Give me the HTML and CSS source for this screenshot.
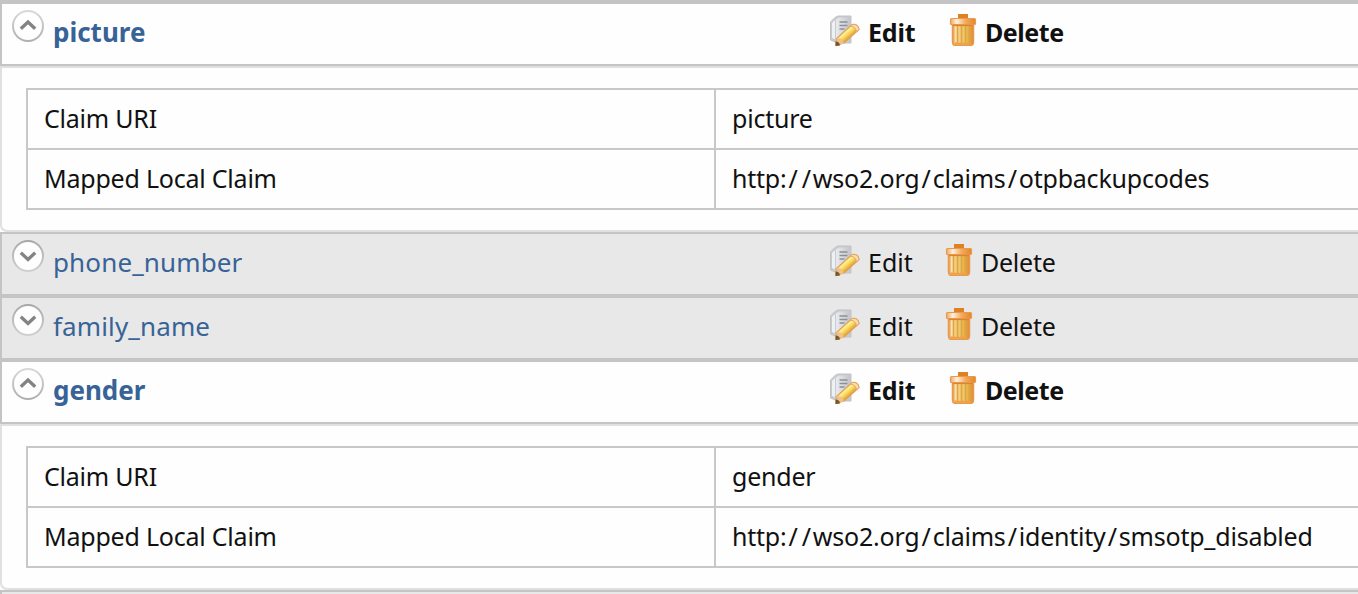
FILE: index.html
```html
<!DOCTYPE html>
<html lang="en">
<head>
<meta charset="utf-8">
<title>Claims</title>
<link rel="stylesheet" href="styles.css">
</head>
<body>
<svg class="defs" width="0" height="0" aria-hidden="true">
  <defs>
    <linearGradient id="ringUp" x1="0" y1="0" x2="0" y2="1"><stop offset="0" stop-color="#d8d8d8"/><stop offset="1" stop-color="#b0b0b0"/></linearGradient>
    <linearGradient id="ringDown" x1="0" y1="0" x2="0" y2="1"><stop offset="0" stop-color="#a8a8a8"/><stop offset="1" stop-color="#d0d0d0"/></linearGradient>
    <linearGradient id="page" x1="0" y1="0" x2="1" y2="0"><stop offset="0" stop-color="#e9ebee"/><stop offset="1" stop-color="#c3c5ca"/></linearGradient>
    <linearGradient id="pencil" gradientUnits="userSpaceOnUse" x1="15" y1="14" x2="22" y2="22"><stop offset="0" stop-color="#f3c65c"/><stop offset=".35" stop-color="#fff09a"/><stop offset=".65" stop-color="#f6d24e"/><stop offset="1" stop-color="#df963c"/></linearGradient>
    <linearGradient id="bin" x1="0" y1="0" x2="1" y2="0"><stop offset="0" stop-color="#e99a48"/><stop offset=".2" stop-color="#f8d58e"/><stop offset=".6" stop-color="#efc45c"/><stop offset="1" stop-color="#e08a2c"/></linearGradient>
    <linearGradient id="lid" x1="0" y1="0" x2="1" y2="0"><stop offset="0" stop-color="#f0a860"/><stop offset=".25" stop-color="#fff0dc"/><stop offset=".6" stop-color="#f3ab5c"/><stop offset="1" stop-color="#e5852a"/></linearGradient>
  </defs>
  <symbol id="up" viewBox="0 0 32 32"><circle cx="16" cy="16" r="15" fill="#fefefe" stroke="url(#ringUp)" stroke-width="2"/><path d="M8.800 18.800 16 12l7.200 6.800" fill="none" stroke="#838383" stroke-width="3.300"/></symbol>
  <symbol id="down" viewBox="0 0 32 32"><circle cx="16" cy="16" r="15" fill="#fefefe" stroke="url(#ringDown)" stroke-width="2"/><path d="M8.800 12.700 16 19.500l7.200-6.800" fill="none" stroke="#838383" stroke-width="3.300"/></symbol>
  <symbol id="edit" viewBox="0 0 32 32">
    <path d="M6 2.500 9 1h13v27H9l-7.500-3V7z" fill="#c9cbcf" stroke="#c0c2c6"/>
    <path d="M7 4.500 10 2.500h11v24H7z" fill="url(#page)"/>
    <path d="M3 8l3-3v19l-3-1z" fill="#eff0f2"/>
    <path d="M10.500 7h8M10.500 10.500h8M10.500 14h5" stroke="#8d9097" stroke-width="1.500"/>
    <path d="M7 30.500 7.500 23.500 23 9.500q6-1 7 5L15 28z" fill="url(#pencil)" stroke="#e0a155" stroke-width="1.200"/>
    <path d="M21.500 11 23 9.500q6-1 7 5L27.500 17q-.5-5-6-6z" fill="#fbdcb0" stroke="#e2a466"/>
    <path d="M7.500 23.500q6-1 7.500 5l-7 2z" fill="#f0c08a"/>
    <path d="M6.500 26.500q4 0 4.500 4l-4.500.5z" fill="#7a5426"/>
  </symbol>
  <symbol id="trash" viewBox="0 0 28 32">
    <path d="M9 0h10v5H9z" fill="#df8122"/>
    <path d="M3.500 10h21v18q0 3.500-3.500 3.500H7Q3.500 31.500 3.500 28z" fill="url(#bin)" stroke="#e9994c" stroke-width="1.500"/>
    <path d="M8.500 12v17M12.500 12v17M16.500 12v17M20.500 12v17" stroke="#dca546" stroke-width="1.500"/>
    <path d="M6.500 12v16" stroke="#fbe0b4" stroke-width="1.500"/>
    <path d="M6 29.800h16" stroke="#eda04c" stroke-width="2"/>
    <rect x="1.500" y="4.500" width="25" height="6" rx="1" fill="url(#lid)" stroke="#ea9a50" stroke-width="1.200"/>
    <path d="M4 11.500h20" stroke="#d98430" stroke-width="1.200"/>
  </symbol>
</svg>
<main class="claims">
  <section>
    <header class="bar open">
      <svg class="toggle"><use href="#up"/></svg><a class="name">picture</a>
      <div class="actions"><svg class="edit-icon"><use href="#edit"/></svg><span class="edit">Edit</span><svg class="trash-icon"><use href="#trash"/></svg><span class="delete">Delete</span></div>
    </header>
    <div class="panel">
      <div class="table">
        <div class="cell">Claim URI</div><div class="cell">picture</div>
        <div class="cell">Mapped Local Claim</div><div class="cell">http:<i>/</i><i>/</i>wso2.org<i>/</i>claims<i>/</i>otpbackupcodes</div>
      </div>
    </div>
  </section>
  <section>
    <header class="bar">
      <svg class="toggle"><use href="#down"/></svg><a class="name">phone_number</a>
      <div class="actions"><svg class="edit-icon"><use href="#edit"/></svg><span class="edit">Edit</span><svg class="trash-icon"><use href="#trash"/></svg><span class="delete">Delete</span></div>
    </header>
  </section>
  <section>
    <header class="bar">
      <svg class="toggle"><use href="#down"/></svg><a class="name">family_name</a>
      <div class="actions"><svg class="edit-icon"><use href="#edit"/></svg><span class="edit">Edit</span><svg class="trash-icon"><use href="#trash"/></svg><span class="delete">Delete</span></div>
    </header>
  </section>
  <section>
    <header class="bar open">
      <svg class="toggle"><use href="#up"/></svg><a class="name">gender</a>
      <div class="actions"><svg class="edit-icon"><use href="#edit"/></svg><span class="edit">Edit</span><svg class="trash-icon"><use href="#trash"/></svg><span class="delete">Delete</span></div>
    </header>
    <div class="panel">
      <div class="table">
        <div class="cell">Claim URI</div><div class="cell">gender</div>
        <div class="cell">Mapped Local Claim</div><div class="cell">http:<i>/</i><i>/</i>wso2.org<i>/</i>claims<i>/</i>identity<i>/</i>smsotp_disabled</div>
      </div>
    </div>
  </section>
  <div class="next"></div>
</main>
</body>
</html>
```
FILE: styles.css
```css
* { box-sizing: border-box; }
body { margin: 0; background: #fefefe; font-family: "Noto Sans", sans-serif; font-size: 25px; color: #111; overflow: hidden; }
.defs { display: block; height: 0; }
.claims { height: 594px; border-top: 2px solid #c4c4c6; overflow: hidden; }
.bar { display: flex; height: 64px; border: 2px solid #c4c4c6; border-right: 0; background: #e8e8e8; padding-left: 10px; line-height: 36px; }
.open { background: #fefefe; font-weight: 700; }
.toggle { width: 32px; height: 32px; margin-top: 6px; flex: none; }
.name { width: 776px; margin-left: 9px; padding-top: 10px; color: #386397; flex: none; font-size: 26px; letter-spacing: .13px; }
.open .name { letter-spacing: 0; }
.actions { display: flex; padding-top: 10px; }
.edit-icon { width: 32px; height: 32px; margin-top: 1px; flex: none; }
.edit { width: 78px; margin-left: 7px; margin-right: -1px; }
.open .edit { width: 82px; letter-spacing: -.2px; }
.trash-icon { width: 28px; height: 32px; flex: none; }
.delete { margin-left: 8px; letter-spacing: -.25px; }
.open .delete { letter-spacing: -.45px; }
.panel { height: 166px; border: 2px solid #e0e0e0; border-right: 0; border-bottom-left-radius: 7px; padding: 20px 0 0 24px; }
.table { display: grid; grid-template-columns: 688px 1fr; grid-template-rows: 60px 60px; border: solid #c8c8c8; border-width: 2px 0 0 2px; }
.cell { border: solid #c8c8c8; border-width: 0 2px 2px 0; padding: 10px 0 0 16px; line-height: 36px; white-space: nowrap; letter-spacing: -.22px; }
.cell:nth-child(even) { border-right: 0; }
.cell i { font-style: normal; padding: 0 2.05px; }
.next { height: 64px; border: 2px solid #c4c4c6; border-right: 0; background: #e8e8e8; }
```
